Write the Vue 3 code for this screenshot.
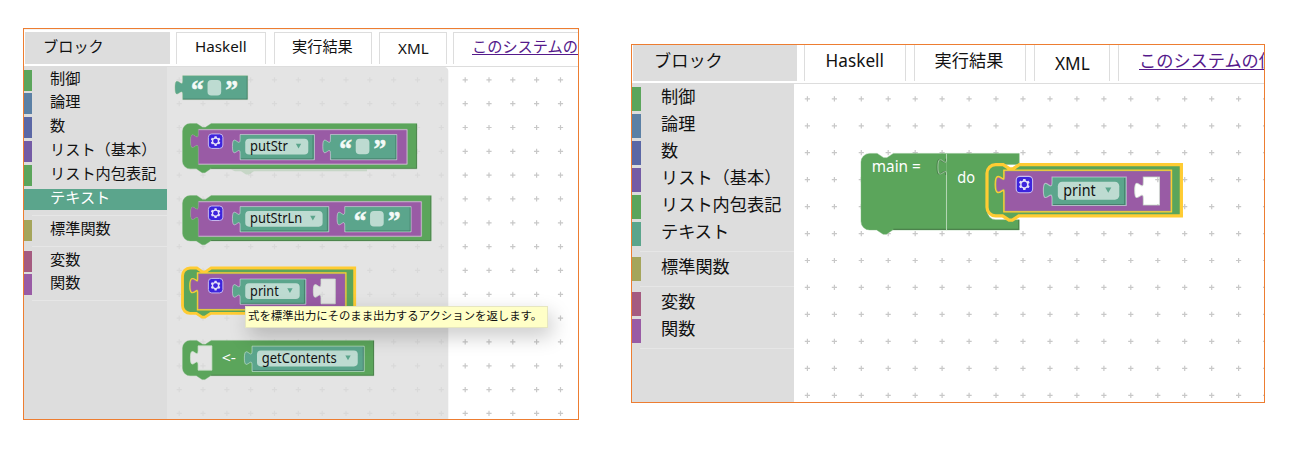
<script setup>
const GREEN = '#5ba55b'
const PURPLE = '#995ba5'
const TEAL = '#5ba58c'

const categories = [
  { name: '制御', color: '#5ba55b' },
  { name: '論理', color: '#5b80a5' },
  { name: '数', color: '#5b67a5' },
  { name: 'リスト（基本）', color: '#745ba5' },
  { name: 'リスト内包表記', color: '#5ba55b' },
  { name: 'テキスト', color: '#5ba58c' },
  { sep: true },
  { name: '標準関数', color: '#a5a55b' },
  { sep: true },
  { name: '変数', color: '#a55b80' },
  { name: '関数', color: '#995ba5' },
  { sep: true },
]

// Block outlines, in workspace units
const TAB_UP = 'c 0,-10 -8,8 -8,-7.5 s 8,2.5 8,-7.5'
const TAB_DOWN = 'c 0,10 -8,-8 -8,7.5 s 8,-2.5 8,7.5'
const stack = (w, h) =>
  `M 0,8 A 8,8 0 0 1 8,0 H 15 l 6,4 h 3 l 6,-4 H ${w} V ${h} H 29.5 l -6,4 h -3 l -6,-4 H 8 a 8,8 0 0 1 -8,-8 Z`
const value = (x, y, w, h) => `M ${x},${y} h ${w} v ${h} h ${-w} V ${y + 20} ${TAB_UP} Z`
const socket = (x, y, w, h) => `M ${x},${y} v 5 ${TAB_DOWN} V ${y + h} h ${w} v ${-h} Z`
const edge = (x, y, w, h) => `M ${x + w - 0.5},${y + 0.5} V ${y + h - 0.5} H ${x + 0.5}`

function action(x, y, name, fieldEnd, textW, end, quoted, selected) {
  const green = stack(end + 10, 47.5) + socket(16.5, 6, end - 16.5, 37)
  const hole = quoted ? '' : socket(145, 11.5, 15, 26)
  const parts = [
    { d: green, fill: GREEN, cls: selected ? 'selected' : 'block' },
    { d: edge(0, 0, end + 10, 47.5).replace(/H .*/, 'H 30'), cls: selected ? 'none' : 'dark' },
    { d: value(16.5, 6, end - 16.5, 37) + hole, fill: PURPLE, cls: 'block' },
    { d: edge(16.5, 6, end - 16.5, 37), cls: selected ? 'none' : 'rim' },
    { d: `M 17,6.5 H ${end - 0.5}`, cls: selected ? 'none' : 'rim' },
    { d: socket(60.3, 11.5, fieldEnd + 6.5 - 60.3, 26.5), fill: TEAL, cls: 'rim' },
    { d: edge(60.8, 12, fieldEnd + 5.5 - 60.8, 25.5), cls: 'dark' },
  ]
  if (hole) parts.push({ d: hole, fill: 'none', cls: 'rim' })
  const q = fieldEnd + 23.2
  if (quoted) {
    parts.push({ d: socket(q, 11.5, 69.5, 26.5), fill: TEAL, cls: 'rim' })
    parts.push({ d: edge(q + 0.5, 12, 68.5, 25.5), cls: 'dark' })
  }
  return {
    x, y, parts, gear: true,
    fields: [{ x: 65.7, y: 16, w: fieldEnd - 65.7, text: name, tx: 70.8, tw: textW }],
    quotes: quoted ? [{ x: q + 9, y: 16 }] : [],
    labels: [],
  }
}

const print = (x, y) => action(x, y, 'print', 122.7, 30, 170.3, false, true)

const flyoutBlocks = [
  {
    x: 182.7, y: 75.7, fields: [], labels: [], quotes: [{ x: 8.5, y: 4.5 }],
    parts: [
      { d: value(0, 0, 68, 25), fill: TEAL, cls: 'block' },
      { d: edge(0, 0, 68, 25), cls: 'dark' },
    ],
  },
  action(182.5, 123.5, 'putStr', 131.7, 39.5, 235.5, true, false),
  action(182.5, 195.6, 'putStrLn', 146.7, 54.5, 250.5, true, false),
  print(182.5, 268),
  {
    x: 182.5, y: 340.4, quotes: [],
    fields: [{ x: 78, y: 10.7, w: 105.5, text: 'getContents', tx: 83, tw: 78.5 }],
    labels: [{ x: 41, y: 23.5, text: '<-', w: 15 }],
    parts: [
      { d: stack(200.5, 37) + socket(16.3, 5.7, 14.5, 25.5), fill: GREEN, cls: 'block' },
      { d: edge(0, 0, 200.5, 37).replace(/H .*/, 'H 30'), cls: 'dark' },
      { d: socket(16.3, 5.7, 14.5, 25.5), fill: 'none', cls: 'rim' },
      { d: socket(72.8, 6, 117.5, 26.5), fill: TEAL, cls: 'rim' },
      { d: edge(73.3, 6.5, 116.5, 25.5), cls: 'dark' },
    ],
  },
]

const mainBlocks = [
  {
    x: 861, y: 153.4, fields: [], quotes: [],
    labels: [
      { x: 10, y: 17.7, text: 'main =', w: 45.5 },
      { x: 89.3, y: 27.5, text: 'do', w: 16.5 },
    ],
    parts: [
      { d: 'M 0,8 A 8,8 0 0 1 8,0 H 15 l 6,4 h 3 l 6,-4 H 79.5 V 71 H 29.5 l -6,4 h -3 l -6,-4 H 8 a 8,8 0 0 1 -8,-8 Z', fill: GREEN, cls: 'block' },
      { d: 'M 79.3,0 H 146.8 V 10.3 H 125 a 8,8 0 0 0 -8,8 V 53.5 a 8,8 0 0 0 8,8 H 146.8 V 71 H 79.3 Z', fill: GREEN, cls: 'block' },
      { d: 'M 79.3,0 v 5 ' + TAB_DOWN + ' V 71', fill: 'none', cls: 'rim' },
      { d: 'M 78.5,5 ' + TAB_DOWN, fill: 'none', cls: 'dark' },
      { d: 'M 146.3,61.5 V 70.5 H 80 M 78.8,70.5 H 30', fill: 'none', cls: 'dark' },
    ],
  },
  print(987, 164.6),
]

function grid(x0, y0, step, cols, rows) {
  let d = ''
  for (let r = 0; r < rows; r++)
    for (let c = 0; c < cols; c++)
      d += `M${(x0 + c * step - 2.6).toFixed(1)},${(y0 + r * step).toFixed(1)}h5.2m-2.6,-2.6v5.2`
  return d
}

const panels = [
  {
    id: 'small', view: '167 67 411 352', scale: 0.955, selected: 'テキスト', flyout: true,
    grid: grid(179.2, 79.8, 23.83, 17, 15), blocks: flyoutBlocks,
  },
  {
    id: 'large', view: '794 84 470 318', scale: 1.078, selected: '', flyout: false,
    grid: grid(807.4, 98.8, 26.95, 18, 12), blocks: mainBlocks,
  },
]

const gear =
  'm4.203,7.296 0,1.368 -0.92,0.677 -0.11,0.41 0.9,1.559 0.41,0.11 1.043,-0.457 1.187,0.683 0.127,1.134 0.3,0.3 1.8,0 0.3,-0.299 0.127,-1.138 1.185,-0.682 1.046,0.458 0.409,-0.11 0.9,-1.559 -0.11,-0.41 -0.92,-0.677 0,-1.366 0.92,-0.677 0.11,-0.41 -0.9,-1.559 -0.409,-0.109 -1.046,0.458 -1.185,-0.682 -0.127,-1.138 -0.3,-0.299 -1.8,0 -0.3,0.3 -0.126,1.135 -1.187,0.682 -1.043,-0.457 -0.41,0.11 -0.899,1.559 0.108,0.409z'
</script>

<template>
  <main class="page">
    <section v-for="p in panels" :key="p.id" class="panel" :class="p.id">
      <header class="tabs">
        <div class="tab blocks">ブロック</div>
        <div class="tab haskell">Haskell</div>
        <div class="tab result">実行結果</div>
        <div class="tab xml">XML</div>
        <div class="tab help"><a>このシステムの使い方</a></div>
      </header>
      <div class="body">
        <nav class="toolbox">
          <template v-for="(c, i) in categories" :key="i">
            <div v-if="c.sep" class="sep"></div>
            <div
              v-else
              class="row"
              :class="{ active: c.name === p.selected }"
              :style="{ '--color': c.color }"
            >{{ c.name }}</div>
          </template>
        </nav>
        <svg class="workspace" :viewBox="p.view">
          <path class="grid" :d="p.grid" />
          <template v-if="p.flyout">
            <path class="flyout" d="M167,67 H444 a4,4 0 0 1 4.3,4.3 V419 H167 Z" />
            <path class="ghost" d="M231,169.5 H367 V171.2 H254 l-5,3.4 h-3 l-5,-3.4 h-6 Z" />
          </template>
          <g
            v-for="(b, i) in p.blocks"
            :key="i"
            :transform="`translate(${b.x} ${b.y}) scale(${p.scale})`"
          >
            <path
              v-for="(s, j) in b.parts"
              :key="j"
              :d="s.d"
              :class="s.cls"
              :fill="s.fill || 'none'"
              fill-rule="evenodd"
            />
            <g v-if="b.gear" transform="translate(26.6 10.4)">
              <rect class="gear-box" x=".5" y=".5" width="15.2" height="15.2" rx="3.5" />
              <path class="gear" :d="gear" />
              <circle class="gear-hub" cx="8" cy="8" r="2.5" />
            </g>
            <g v-for="(f, j) in b.fields" :key="'f' + j">
              <rect class="field" :x="f.x" :y="f.y" :width="f.w" height="16.5" rx="4" />
              <text class="field-text" :x="f.tx" :y="f.y + 12.9" :textLength="f.tw" lengthAdjust="spacingAndGlyphs">{{ f.text }}</text>
              <path :fill="TEAL" :d="`M ${f.x + f.w - 13},${f.y + 5.2} h 5.6 l -2.8,5 z`" />
            </g>
            <g v-for="(q, j) in b.quotes" :key="'q' + j">
              <text class="quote" :x="q.x + .3" :y="q.y + 19.7" textLength="13.4" lengthAdjust="spacingAndGlyphs">“</text>
              <rect class="field" :x="q.x + 17.5" :y="q.y" width="14.3" height="16.3" rx="4" />
              <text class="quote" :x="q.x + 36" :y="q.y + 19.7" textLength="13.4" lengthAdjust="spacingAndGlyphs">”</text>
            </g>
            <text
              v-for="(l, j) in b.labels"
              :key="'l' + j"
              class="label"
              :x="l.x"
              :y="l.y"
              :textLength="l.w"
              lengthAdjust="spacingAndGlyphs"
            >{{ l.text }}</text>
          </g>
        </svg>
      </div>
      <div v-if="p.flyout" class="tooltip">式を標準出力にそのまま出力するアクションを返します。</div>
    </section>
  </main>
</template>

<style>
body { background: #fff; }
</style>

<style scoped>
.page {
  display: flex;
  align-items: flex-start;
  gap: 52px;
  height: 457px;
  padding: 28px 0 0 23px;
  box-sizing: border-box;
  overflow: hidden;
  font-family: "Noto Sans", "Noto Sans CJK JP", sans-serif;
  color: #111;
}
.panel {
  position: relative;
  display: flex;
  flex-direction: column;
  flex: none;
  box-sizing: border-box;
  border: 1px solid #ed7d31;
  background: #fff;
}
.small { width: 556px; height: 392px; font-size: 15.2px; }
.large { width: 634px; height: 359px; margin-top: 16px; font-size: 17.2px; }

.tabs {
  display: flex;
  flex: none;
  box-sizing: border-box;
  border-bottom: 1px solid #ddd;
  overflow: hidden;
  white-space: nowrap;
}
.small .tabs { height: 38px; padding: 2px 0 2px 1px; border-top: 1px solid #f3f3f3; }
.large .tabs { height: 39px; padding: 0 0 2px 1px; }
.tab {
  flex: none;
  box-sizing: border-box;
  border: 1px solid #ddd;
  border-bottom: 0;
}
.large .tab { border-top: 0; }
.tab.blocks { background: #ddd; }
.help { border-right: 0; }
.help a { color: #551a8b; text-decoration: underline; text-decoration-thickness: 1px; text-underline-offset: 2px; }

.small .tab { line-height: 26px; }
.small .blocks { width: 145px; padding-left: 17px; margin-right: 6px; }
.small .haskell { width: 90px; padding-left: 18px; margin-right: 8px; }
.small .result { width: 98px; padding-left: 17px; margin-right: 7px; }
.small .xml { width: 68px; padding-left: 18px; padding-top: 2px; margin-right: 6px; }
.small .help { width: 200px; padding-left: 18px; }

.large .tab { line-height: 32px; }
.large .blocks { width: 164px; padding-left: 20px; margin-right: 7px; }
.large .haskell { width: 102px; padding-left: 20.6px; margin-right: 8px; }
.large .result { width: 112px; padding-left: 19.6px; margin-right: 8px; }
.large .xml { width: 76px; padding-left: 20px; padding-top: 3px; margin-right: 8px; }
.large .help { width: 220px; padding-left: 20px; }

.body { display: flex; flex: 1; min-height: 0; }
.toolbox { display: flex; flex-direction: column; flex: none; box-sizing: border-box; background: #ddd; white-space: nowrap; }
.small .toolbox { width: 143px; padding-top: 2.6px; }
.large .toolbox { width: 162px; padding-top: 3px; }
.row { flex: none; box-sizing: border-box; border-left: 8px solid var(--color); }
.small .row { height: 21px; margin-bottom: 2.85px; padding-left: 18px; line-height: 17px; }
.large .row { height: 24px; margin-bottom: 2.95px; padding-left: 20px; line-height: 20px; border-left-width: 9px; }
.row.active { background: var(--color); color: #fff; }
.sep { flex: none; box-sizing: border-box; margin-left: 8px; border-top: 1px solid #e6e6e6; }
.small .sep { height: 5px; margin-top: 2px; }
.large .sep { height: 5.6px; margin-top: 2.6px; }

.workspace { display: block; flex: none; }
.small .workspace { width: 411px; height: 352px; }
.large .workspace { width: 470px; height: 318px; }
.grid { fill: none; stroke: #c8c8c8; stroke-width: 1.2; }
.flyout { fill: #ddd; fill-opacity: .8; }
.ghost { fill: #5ba55b; opacity: .22; }
.block { stroke: #7cb77c; stroke-width: .4; }
.none { stroke: none; }
.dark { stroke: #000; stroke-opacity: .22; stroke-width: 1; }
.rim { stroke: #fff; stroke-opacity: .45; stroke-width: 1; }
.selected { stroke: #fc3; stroke-width: 3; }
.field { fill: #fff; fill-opacity: .6; }
.field-text { font-size: 14.7px; fill: #111; }
.label { font-size: 14.7px; fill: #fff; }
.quote { font-family: "Liberation Serif", serif; font-weight: bold; font-size: 28px; fill: #f4faf7; stroke: #f4faf7; stroke-width: .5; }
.gear-box { fill: #3d24dd; stroke: #c9bdf0; stroke-width: 1; }
.gear { fill: #e4e0f8; }
.gear-hub { fill: #3d24dd; }

.tooltip {
  position: absolute;
  left: 221px;
  top: 277px;
  width: 303px;
  height: 22px;
  box-sizing: border-box;
  padding-left: 2px;
  border: 1px solid #e6e6c0;
  background: #ffffc7;
  box-shadow: 4px 8px 20px rgba(0, 0, 0, .22);
  font-size: 11.4px;
  line-height: 18px;
  white-space: nowrap;
}
</style>
